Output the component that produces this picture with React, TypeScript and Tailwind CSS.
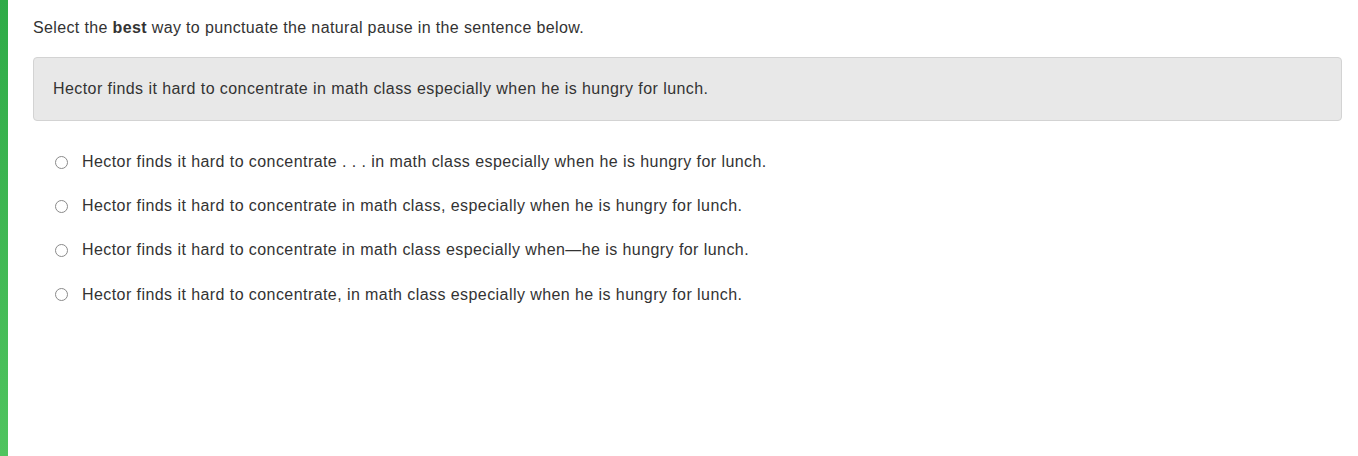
import React from 'react';

const options = [
  'Hector finds it hard to concentrate . . . in math class especially when he is hungry for lunch.',
  'Hector finds it hard to concentrate in math class, especially when he is hungry for lunch.',
  'Hector finds it hard to concentrate in math class especially when\u2014he is hungry for lunch.',
  'Hector finds it hard to concentrate, in math class especially when he is hungry for lunch.',
];

const App = () => {
  return (
    <div className="flex w-[1358px] h-[456px] bg-white text-[#333333] font-['Liberation_Sans',Arial,sans-serif] text-[16px] overflow-hidden">
      <div className="w-[8px] h-full shrink-0 bg-gradient-to-b from-[#2eab47] to-[#4fc45f]"></div>

      <div className="flex-1 pl-[25px] pr-[16px] pt-[17px]">
        <p className="leading-[22px] tracking-[0.36px]">
          Select the <b>best</b> way to punctuate the natural pause in the sentence below.
        </p>

        <div className="mt-[18px] h-[64px] flex items-center px-[19px] bg-[#e8e8e8] border border-[#d3d3d3] rounded-[4px]">
          <p className="leading-[22px] tracking-[0.43px]">
            Hector finds it hard to concentrate in math class especially when he is hungry for lunch.
          </p>
        </div>

        <div className="mt-[30px] flex flex-col gap-[22.2px] pl-[22px]">
          {options.map((opt, i) => (
            <label key={i} className="flex items-center h-[22px] gap-[14px]">
              <span className="w-[13px] h-[13px] rounded-full border border-[#8a8a8a] bg-white shrink-0"></span>
              <span className="leading-[22px] tracking-[0.43px]">{opt}</span>
            </label>
          ))}
        </div>
      </div>
    </div>
  );
};

export default App;
